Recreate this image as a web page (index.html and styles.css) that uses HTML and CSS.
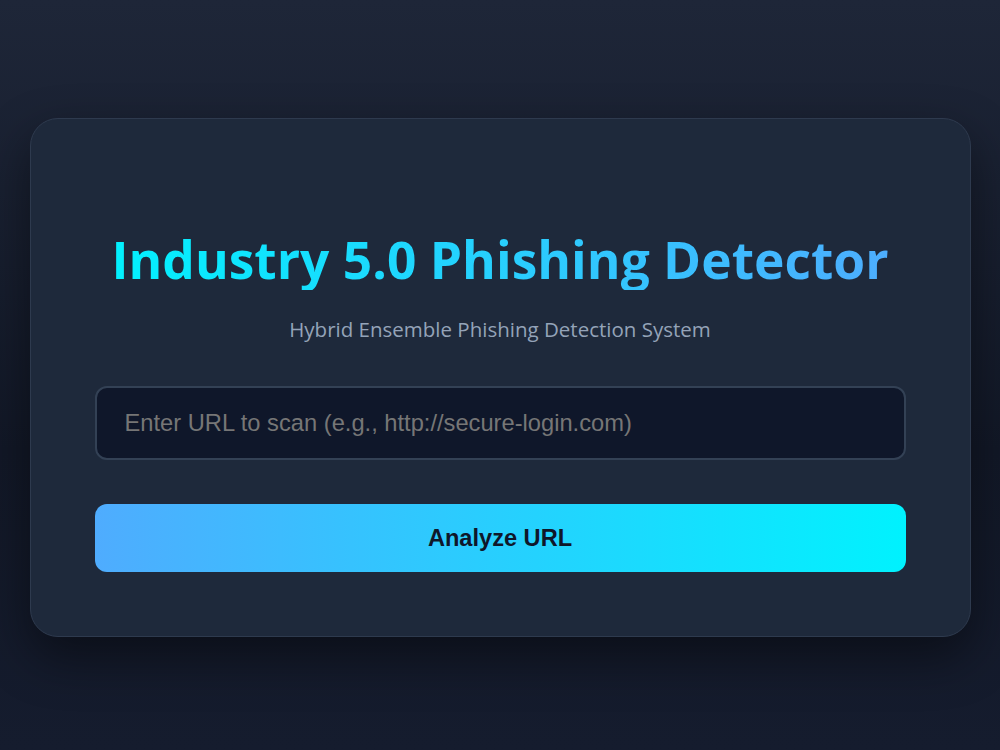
FILE: index.html
```html
<!DOCTYPE html>
<html lang="en">
<head>
    <meta charset="UTF-8">
    <meta name="viewport" content="width=device-width, initial-scale=1.0">
    <title>Industry 5.0 Phishing Detector</title>
    <link rel="stylesheet" href="styles.css">
</head>
<body>
    <div class="card">
        <h1 class="title">Industry 5.0 Phishing Detector</h1>
        <p class="subtitle">Hybrid Ensemble Phishing Detection System</p>

        <input type="text" id="urlInput" class="url-input" placeholder="Enter URL to scan (e.g., http://secure-login.com)">
        <button id="scanBtn" class="scan-btn">Analyze URL</button>
    </div>
</body>
</html>
```

FILE: styles.css
```css
*{
    margin: 0;
    padding: 0;
    box-sizing: border-box;
}
body{
    min-height: 100vh;
    padding-top: 5px;
    display: flex;
    justify-content: center;
    align-items: center;
    background: linear-gradient(180deg, #1e2638 0%, #121827 60%, #151c2e 100%);
    font-family: "Open Sans", "Noto Sans", sans-serif;
}
.card{
    width: 941px;
    padding: 64px;
    background-color: #1e293b;
    border: 1px solid #2e3a4e;
    border-radius: 28px;
    box-shadow: 0 20px 50px rgba(0, 0, 0, 0.45);
    text-align: center;
}
.title{
    font-size: 51.5px;
    font-weight: 700;
    line-height: 62px;
    margin-top: 45px;
    background: linear-gradient(90deg, #00f2fe, #4facfe);
    -webkit-background-clip: text;
    background-clip: text;
    color: transparent;
}
.subtitle{
    color: #94a3b8;
    font-size: 20.5px;
    line-height: 28px;
    margin-top: 25px;
}
.url-input{
    display: block;
    width: 100%;
    height: 74px;
    margin-top: 43px;
    padding: 0 28px;
    background-color: #0f172a;
    border: 2px solid #334155;
    border-radius: 12px;
    color: #e2e8f0;
    font-family: "Liberation Sans", Arial, sans-serif;
    font-size: 23.7px;
    outline: none;
}
.url-input::placeholder{
    color: #767676;
}
.scan-btn{
    display: block;
    width: 100%;
    height: 68px;
    margin-top: 44px;
    border: none;
    border-radius: 12px;
    background: linear-gradient(90deg, #4facfe, #00f2fe);
    color: #0f172a;
    font-family: "Liberation Sans", Arial, sans-serif;
    font-size: 23.6px;
    font-weight: 700;
    cursor: pointer;
}
```
